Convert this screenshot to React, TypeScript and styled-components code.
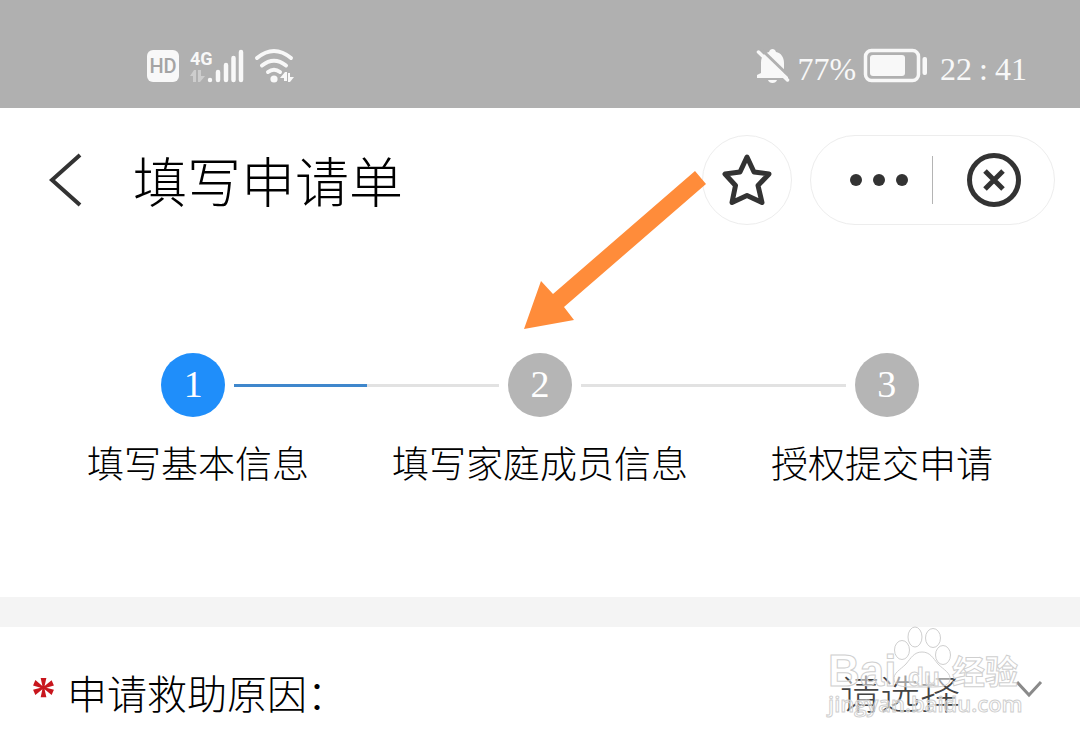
import React from "react";
import styled, { createGlobalStyle } from "styled-components";

const GlobalStyle = createGlobalStyle`
  *, *::before, *::after { box-sizing: border-box; }
  body {
    margin: 0;
    background: #fff;
    color: #000;
    font-family: "Noto Sans CJK SC", sans-serif;
    font-weight: 300;
  }
  button { padding: 0; border: 0; background: none; cursor: pointer; }
  svg { display: block; overflow: visible; }
`;

const Page = styled.div`
  position: relative;
  overflow: hidden;
`;

const StatusBar = styled.div`
  display: flex;
  justify-content: space-between;
  height: 108px;
  padding: 46px 53px 22px 147px;
  background: #b0b0b0;
  color: #f8f8f8;
`;

const StatusGroup = styled.div<{ $gap: number }>`
  display: flex;
  align-items: center;
  gap: ${(p) => p.$gap}px;
`;

const StatusText = styled.span`
  padding-top: 6px;
  font: 400 32px/40px "Liberation Serif", serif;
`;

const Clock = styled(StatusText)`
  margin-left: 4px;
`;

const Colon = styled.span`
  padding: 0 7px;
`;

const HdBadge = styled.span`
  width: 32px;
  height: 32px;
  border-radius: 6px;
  background: #f8f8f8;
  color: #a4a4a4;
  font: 500 20px/33px Roboto, sans-serif;
  text-align: center;
`;

const Header = styled.header`
  display: flex;
  align-items: center;
  padding: 27px 25px 0 48px;
`;

const BackButton = styled.button`
  width: 34px;
  height: 54px;
`;

const Title = styled.h1`
  flex: 1;
  margin: 0 0 0 51px;
  font-size: 54px;
  line-height: 90px;
  font-weight: 300;
`;

const RoundButton = styled.button`
  display: grid;
  place-items: center;
  width: 90px;
  height: 90px;
  margin-right: 18px;
  border: 1px solid #ededed;
  border-radius: 45px;
`;

const Capsule = styled.div`
  display: flex;
  align-items: center;
  width: 245px;
  height: 90px;
  border: 1px solid #ededed;
  border-radius: 45px;
`;

const CapsuleButton = styled.button`
  display: grid;
  flex: 1;
  height: 100%;
  place-items: center;
`;

const MoreDots = styled.svg`
  margin-left: 14px;
`;

const Divider = styled.span`
  width: 1px;
  height: 48px;
  background: #b4b4b4;
`;

const Steps = styled.section`
  padding: 128px 0 108px;
`;

const StepTracks = styled.div`
  display: grid;
  grid-template-columns: repeat(3, 1fr);
  padding: 0 20px;
`;

const StepTrack = styled.div`
  display: flex;
  align-items: center;
  gap: 9px;
`;

const TrackLine = styled.span<{ $tone: "none" | "idle" | "done" }>`
  flex: 1;
  height: 3px;
  background: ${(p) =>
    p.$tone === "done" ? "#3f87cc" : p.$tone === "idle" ? "#e2e2e2" : "transparent"};
`;

const StepDot = styled.span<{ $active?: boolean }>`
  width: 64px;
  height: 64px;
  border-radius: 32px;
  background: ${(p) => (p.$active ? "#1f8efa" : "#b5b5b5")};
  color: #fff;
  font: 400 38px/62px "Liberation Serif", serif;
  text-align: center;
`;

const StepLabels = styled.ol`
  display: flex;
  justify-content: space-evenly;
  margin: 18px 0 0;
  padding: 0 4px;
  list-style: none;
`;

const StepLabel = styled.li`
  font-size: 37px;
  line-height: 54px;
  white-space: nowrap;
`;

const Band = styled.div`
  height: 30px;
  background: #f4f4f4;
`;

const FormRow = styled.div`
  display: flex;
  align-items: center;
  justify-content: space-between;
  padding: 36px 38px 20px 31px;
  font-size: 40px;
  line-height: 58px;
`;

const FieldLabel = styled.label`
  display: flex;
`;

const Required = styled.span`
  width: 36px;
  height: 58px;
  color: #c8161d;
  font: 700 50px/62px "Liberation Serif", serif;
`;

const SelectWrap = styled.div`
  position: relative;
  width: 202px;
`;

const Select = styled.select`
  appearance: none;
  display: block;
  width: 100%;
  height: 58px;
  padding: 0;
  border: 0;
  background: transparent;
  color: #444;
  font: inherit;
`;

const SelectArrow = styled.svg`
  position: absolute;
  right: 0;
  top: 17px;
  pointer-events: none;
`;

const Pointer = styled.svg`
  position: absolute;
  left: calc(50% - 16px);
  top: 170px;
  pointer-events: none;
`;

const Watermark = styled.svg`
  position: absolute;
  right: 52px;
  top: 622px;
  pointer-events: none;
`;

const steps = ["填写基本信息", "填写家庭成员信息", "授权提交申请"];
const current = 0;

const SignalIcon = () => (
  <svg width="54" height="36" viewBox="0 0 54 36" fill="#f8f8f8" aria-hidden="true">
    <text x="0" y="17" fontSize="18" fontWeight="700" fontFamily="'Liberation Sans Narrow', Roboto, sans-serif">4G</text>
    <g fill="#cdcdcd">
      <path d="M0 28l4-6h2v12H3v-6z" />
      <path d="M8 22h3v6h4l-5 6H8z" />
    </g>
    <path
      d="M20 32v0M28 24v8M36 17v15M43.500 10v22M51 4v28"
      stroke="#f8f8f8"
      strokeWidth="4.500"
      strokeLinecap="round"
    />
  </svg>
);

const WifiIcon = () => (
  <svg width="42" height="36" viewBox="0 0 42 36" fill="none" stroke="#f8f8f8" strokeWidth="4" strokeLinecap="round" aria-hidden="true">
    <path d="M2 10Q19 -4 36 10M7 17.500Q19 8 31 17.500M13 24Q19 19.500 25 24" />
    <circle cx="19" cy="31" r="3.600" fill="#f8f8f8" stroke="none" />
    <path d="M25 30l5-6h2v9h-3v-3zM33 25h2v4h4l-4 5h-2z" fill="#f8f8f8" stroke="none" />
  </svg>
);

const MuteIcon = () => (
  <svg width="32" height="36" viewBox="0 0 32 36" aria-hidden="true">
    <path d="M0 30v-3l4-2V15C4 9 7 5 12 4c1-4 6-4 7 0 5 1 8 5 8 11v10l4 2v3z" fill="#f8f8f8" />
    <path d="M11 32h9c-1 4-8 4-9 0z" fill="#f8f8f8" />
    <path d="M4 1l29 28" stroke="#b0b0b0" strokeWidth="3" />
    <path d="M1.500 4l29 28" stroke="#f8f8f8" strokeWidth="3.500" strokeLinecap="round" />
  </svg>
);

const BatteryIcon = () => (
  <svg width="64" height="34" viewBox="0 0 64 34" aria-hidden="true">
    <rect x="1.500" y="1.500" width="53" height="30" rx="6" fill="none" stroke="#f8f8f8" strokeWidth="3.500" />
    <rect x="6" y="6" width="35" height="21" rx="3" fill="#f8f8f8" />
    <rect x="58.500" y="8" width="4.500" height="18" rx="2" fill="#f8f8f8" />
  </svg>
);

export default function App() {
  return (
    <Page>
      <GlobalStyle />
      <StatusBar>
        <StatusGroup $gap={11}>
          <HdBadge>HD</HdBadge>
          <SignalIcon />
          <WifiIcon />
        </StatusGroup>
        <StatusGroup $gap={8}>
          <MuteIcon />
          <StatusText>77%</StatusText>
          <BatteryIcon />
          <Clock>
            22<Colon>:</Colon>41
          </Clock>
        </StatusGroup>
      </StatusBar>

      <Header>
        <BackButton aria-label="返回">
          <svg width="34" height="54" viewBox="0 0 34 54" fill="none" stroke="#333" strokeWidth="4">
            <path d="M32 2L4 27l28 25" />
          </svg>
        </BackButton>
        <Title>填写申请单</Title>
        <RoundButton aria-label="收藏">
          <svg width="50" height="52" viewBox="0 0 50 52" fill="none" stroke="#333" strokeWidth="5" strokeLinejoin="round">
            <path d="M25 3L32 18L47 20L36 31.500L40 48.500L25 41.500L10 48.500L13.500 31.500L3 20L18 18Z" />
          </svg>
        </RoundButton>
        <Capsule>
          <CapsuleButton aria-label="更多">
            <MoreDots width="58" height="12" viewBox="0 0 58 12" fill="#333">
              <circle cx="6" cy="6" r="6" />
              <circle cx="29" cy="6" r="6" />
              <circle cx="52" cy="6" r="6" />
            </MoreDots>
          </CapsuleButton>
          <Divider />
          <CapsuleButton aria-label="关闭">
            <svg width="54" height="54" viewBox="0 0 54 54" fill="none" stroke="#333" strokeWidth="5">
              <circle cx="27" cy="27" r="24.500" />
              <path d="M18 18l18 18M36 18L18 36" />
            </svg>
          </CapsuleButton>
        </Capsule>
      </Header>

      <Steps>
        <StepTracks>
          {steps.map((label, i) => (
            <StepTrack key={label}>
              <TrackLine $tone={i === 0 ? "none" : i <= current ? "done" : "idle"} />
              <StepDot $active={i === current}>{i + 1}</StepDot>
              <TrackLine $tone={i === steps.length - 1 ? "none" : i <= current ? "done" : "idle"} />
            </StepTrack>
          ))}
        </StepTracks>
        <StepLabels>
          {steps.map((label) => (
            <StepLabel key={label}>{label}</StepLabel>
          ))}
        </StepLabels>
      </Steps>

      <Band />

      <FormRow>
        <FieldLabel htmlFor="reason">
          <Required>*</Required>
          申请救助原因：
        </FieldLabel>
        <SelectWrap>
          <Select id="reason" defaultValue="">
            <option value="">请选择</option>
          </Select>
          <SelectArrow width="26" height="18" viewBox="0 0 26 18" fill="none" stroke="#8a8a8a" strokeWidth="3">
            <path d="M1 2l12 13L25 2" />
          </SelectArrow>
        </SelectWrap>
      </FormRow>

      <Pointer width="184" height="162" viewBox="0 0 184 162" aria-hidden="true">
        <path d="M171 1L182 14L40 137L50 150L0 159L17 111L29 124Z" fill="#ff8c3a" />
      </Pointer>

      <Watermark width="204" height="104" viewBox="0 0 204 104" fill="#fff" fillOpacity="0.500" stroke="#cfcfcf" strokeWidth="1" aria-hidden="true">
        <ellipse cx="78" cy="28" rx="7.500" ry="9.500" />
        <ellipse cx="91" cy="15" rx="7" ry="10" />
        <ellipse cx="109" cy="16" rx="7.500" ry="9.500" />
        <ellipse cx="119" cy="33" rx="7.500" ry="9.500" />
        <path d="M98 30c8 0 11 6 16 12 6 6 13 9 12 16-2 8-12 7-28 7s-26 1-28-7c-1-7 6-10 12-16 5-6 8-12 16-12z" />
        <text x="4" y="64" fontFamily="Liberation Sans, sans-serif" fontSize="44" fontWeight="700">Bai</text>
        <text x="84" y="64" fontFamily="Liberation Sans, sans-serif" fontSize="26" fontWeight="700">du</text>
        <text x="128" y="62" fontFamily="Noto Sans CJK SC, sans-serif" fontSize="33" fontWeight="700">经验</text>
        <text x="4" y="90" fontFamily="Open Sans, sans-serif" fontSize="22" fontWeight="600">jingyan.baidu.com</text>
      </Watermark>
    </Page>
  );
}
